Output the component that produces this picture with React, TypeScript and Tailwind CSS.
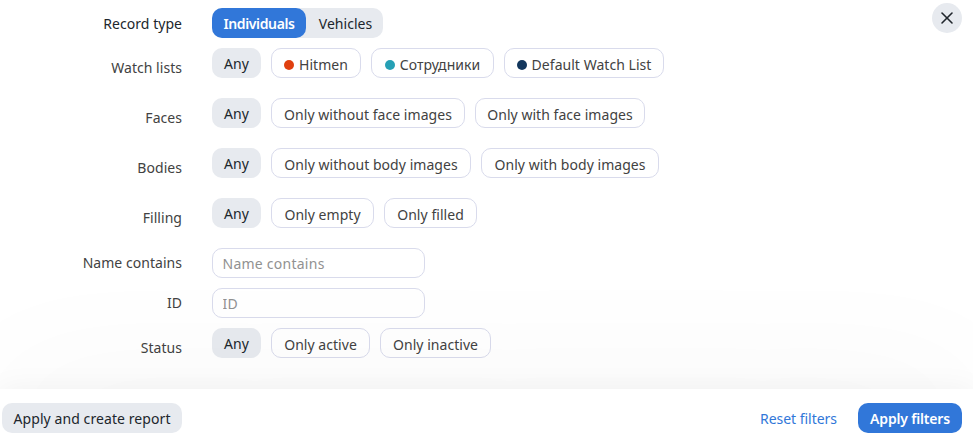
import { X } from "lucide-react";

type Option = { label: string; width: string; dot?: string };
type Filter = { label: string; gap: string; options: Option[] };

const listFilters: Filter[] = [
  {
    label: "Watch lists",
    gap: "mb-5",
    options: [
      { label: "Hitmen", width: "w-[90px]", dot: "bg-[#e0400f]" },
      { label: "Сотрудники", width: "w-[123px]", dot: "bg-[#26a0b5]" },
      { label: "Default Watch List", width: "w-[160px]", dot: "bg-[#12365c]" },
    ],
  },
  {
    label: "Faces",
    gap: "mb-5",
    options: [
      { label: "Only without face images", width: "w-[194px]" },
      { label: "Only with face images", width: "w-[170px]" },
    ],
  },
  {
    label: "Bodies",
    gap: "mb-5",
    options: [
      { label: "Only without body images", width: "w-[200px]" },
      { label: "Only with body images", width: "w-[178px]" },
    ],
  },
  {
    label: "Filling",
    gap: "mb-5",
    options: [
      { label: "Only empty", width: "w-[103px]" },
      { label: "Only filled", width: "w-[93px]" },
    ],
  },
];

const statusFilter: Filter = {
  label: "Status",
  gap: "",
  options: [
    { label: "Only active", width: "w-[99px]" },
    { label: "Only inactive", width: "w-[111px]" },
  ],
};

function Label({ text, className = "" }: { text: string; className?: string }) {
  return (
    <span className={`w-[182px] shrink-0 text-right leading-[30px] ${className}`}>{text}</span>
  );
}

function FilterRow({ filter }: { filter: Filter }) {
  return (
    <div className={`flex h-[30px] gap-[30px] ${filter.gap}`}>
      <Label text={filter.label} className="pt-[5px] text-[#424242]" />
      <div className="flex gap-2.5">
        <button className="h-[30px] w-[49px] rounded-[10px] bg-[#e7eaef] text-[#20262c]">Any</button>
        {filter.options.map((option) => (
          <button
            key={option.label}
            className={`flex h-[30px] items-center justify-center gap-[5px] rounded-[10px] border border-[#d9dbec] bg-white pt-0.5 text-[#424242] ${option.width}`}
          >
            {option.dot && <span className={`mt-px size-2.5 shrink-0 rounded-full ${option.dot}`} />}
            <span>{option.label}</span>
          </button>
        ))}
      </div>
    </div>
  );
}

function TextRow({ label }: { label: string }) {
  return (
    <div className="mb-2.5 flex h-[30px] gap-[30px]">
      <Label text={label} className="text-[#424242]" />
      <input
        placeholder={label}
        className="h-[30px] w-[213px] rounded-[10px] border border-[#d9dbec] bg-white px-[9.5px] tracking-[0.25px] placeholder:text-[#919191]"
      />
    </div>
  );
}

export default function App() {
  return (
    <div className="flex h-[443px] w-[973px] flex-col overflow-hidden bg-white font-['Noto_Sans','Open_Sans',sans-serif] text-[14px] tracking-[0.04px] whitespace-nowrap">
      <div className="flex h-[389px] shrink-0 justify-between">
        <div className="pt-2">
          <div className="mb-2.5 flex h-[30px] gap-[30px]">
            <Label text="Record type" className="pt-px text-[#20262c]" />
            <div className="flex w-[171px] rounded-[10px] bg-[#e7eaef] text-[#20262c]">
              <button className="w-[94px] rounded-[10px] bg-[#3177d9] font-semibold tracking-[-0.36px] text-white">
                Individuals
              </button>
              <button className="w-[77px] pl-0.5">Vehicles</button>
            </div>
          </div>
          {listFilters.map((filter) => (
            <FilterRow key={filter.label} filter={filter} />
          ))}
          <TextRow label="Name contains" />
          <TextRow label="ID" />
          <FilterRow filter={statusFilter} />
        </div>
        <button
          aria-label="Close"
          className="mt-[3px] mr-[11px] flex size-[30px] items-center justify-center rounded-full bg-[#e7eaef] text-[#20262c]"
        >
          <X size={20} strokeWidth={1.9} />
        </button>
      </div>
      <div className="flex h-[54px] shrink-0 items-start justify-between bg-white pt-3.5 pr-[11px] pl-0.5 shadow-[0_0_140px_rgba(0,0,0,0.06),0_0_30px_rgba(0,0,0,0.05)]">
        <button className="h-[30px] w-[180px] rounded-[10px] bg-[#e7eaef] tracking-[0.08px] text-[#20262c]">
          Apply and create report
        </button>
        <div className="flex">
          <button className="mr-[21px] h-[30px] w-[77px] tracking-[-0.04px] text-[#3177d9]">Reset filters</button>
          <button className="h-[30px] w-[104px] rounded-[10px] bg-[#3177d9] font-semibold tracking-[-0.18px] text-white">
            Apply filters
          </button>
        </div>
      </div>
    </div>
  );
}
